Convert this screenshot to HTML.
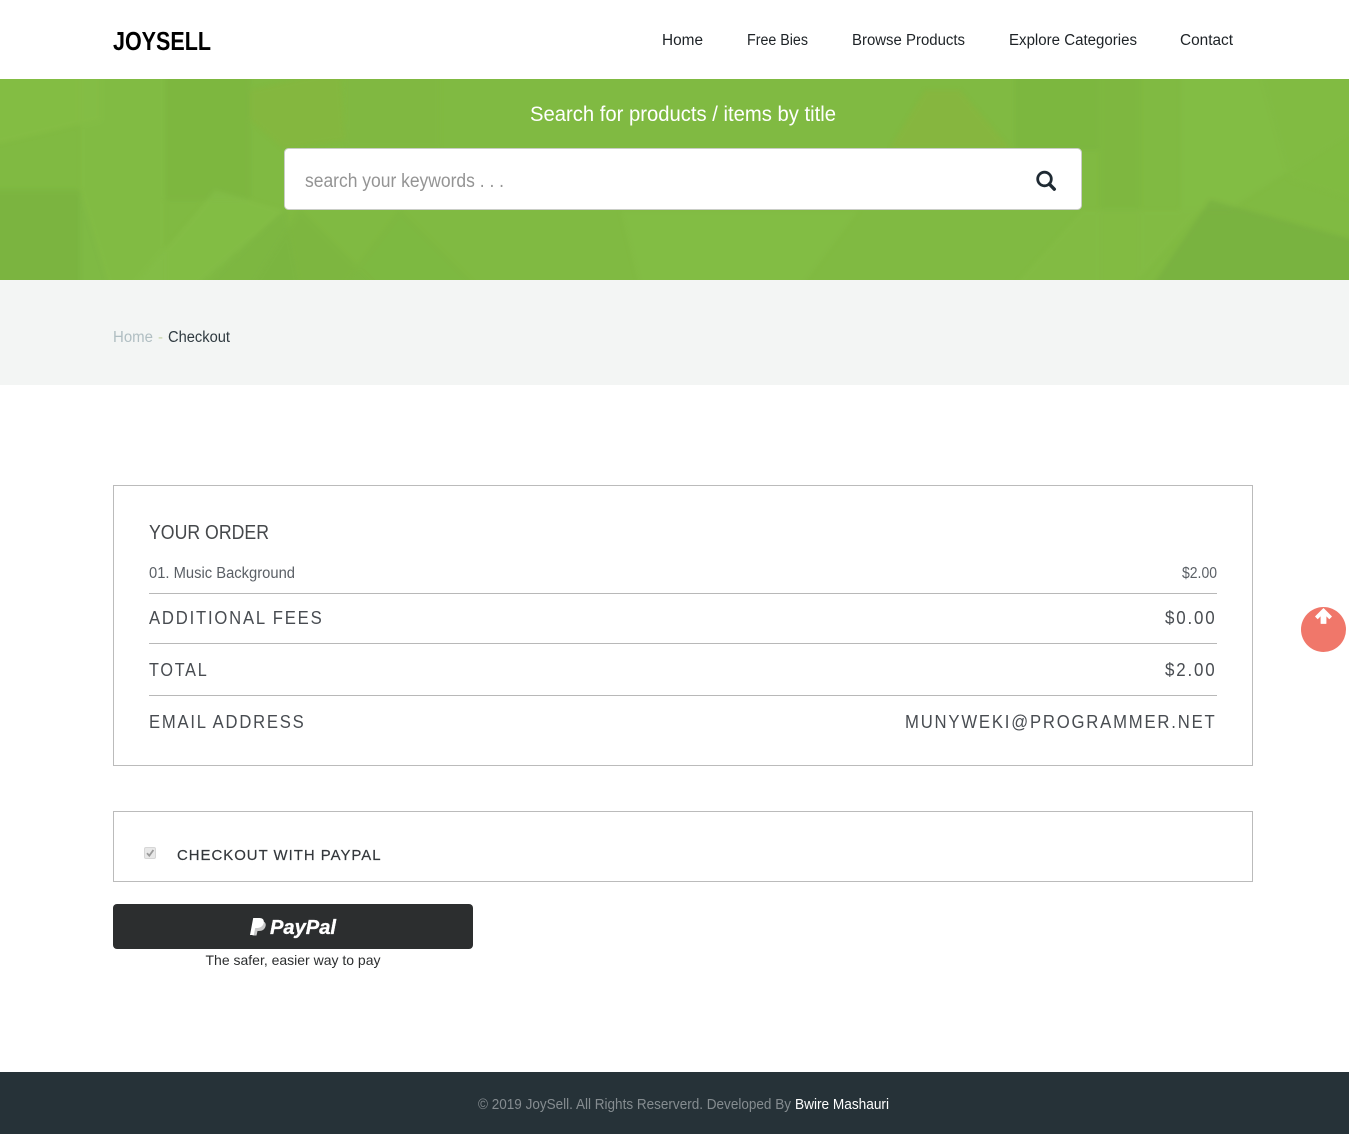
<!DOCTYPE html>
<html lang="en">
<head>
<meta charset="utf-8">
<title>JoySell Checkout</title>
<style>
html,body{margin:0;padding:0;background:#fff;}
body{width:1349px;height:1134px;overflow:hidden;position:relative;}
svg{position:absolute;left:0;top:0;display:block;}
text{font-family:"Liberation Sans",Arial,sans-serif;white-space:pre;}
</style>
</head>
<body>
<svg width="1349" height="1134" viewBox="0 0 1349 1134" xmlns="http://www.w3.org/2000/svg">
  <defs>
    <filter id="soft" x="-5%" y="-5%" width="110%" height="110%"><feGaussianBlur stdDeviation="2.2"/></filter>
    <clipPath id="heroclip"><rect x="0" y="79" width="1349" height="201"/></clipPath>
  </defs>
  <rect width="1349" height="1134" fill="#fff"/>

  <!-- hero -->
  <rect x="0" y="79" width="1349" height="201" fill="#80ba42"/>
  <g clip-path="url(#heroclip)">
    <g filter="url(#soft)" opacity=".68">
      <polygon points="-5,70 100,70 100,120 -5,145" fill="#87c047" opacity=".7"/>
      <polygon points="-5,190 80,190 110,290 -5,290" fill="#78b140" opacity=".9"/>
      <polygon points="80,70 165,70 165,290 80,290" fill="#85bf48" opacity=".55"/>
      <polygon points="165,70 250,70 250,200 165,200" fill="#7ab43f" opacity=".7"/>
      <polygon points="250,90 340,70 345,140 284,149 250,120" fill="#86b63d" opacity=".9"/>
      <polygon points="215,190 284,210 200,290 130,290" fill="#86c04a" opacity=".7"/>
      <polygon points="345,70 440,70 440,148 345,148" fill="#83b83f" opacity=".5"/>
      <polygon points="285,210 300,290 190,290" fill="#76ae42" opacity=".35"/>
      <polygon points="300,210 380,290 250,290" fill="#77b041" opacity=".4"/>
      <polygon points="400,210 480,290 340,290" fill="#7bb540" opacity=".6"/>
      <polygon points="620,210 860,210 800,290 640,290" fill="#85bf47" opacity=".6"/>
      <polygon points="925,90 960,90 1010,148 890,148" fill="#8ab53e" opacity=".9"/>
      <polygon points="1015,70 1100,70 1100,150 1015,150" fill="#79b33f" opacity=".7"/>
      <polygon points="1100,70 1140,70 1140,290 1100,290" fill="#7ab440" opacity=".4"/>
      <polygon points="1180,70 1354,70 1354,130 1230,210 1180,210" fill="#85bf47" opacity=".6"/>
      <polygon points="1082,210 1200,210 1130,290 1010,290" fill="#86c049" opacity=".55"/>
      <polygon points="1210,200 1354,240 1354,290 1150,290" fill="#74ab42" opacity=".75"/>
      <polygon points="1260,70 1354,70 1354,200 1290,180" fill="#82bc44" opacity=".7"/>
    </g>
  </g>

  <!-- breadcrumb band -->
  <rect x="0" y="280" width="1349" height="105" fill="#f3f5f4"/>

  <!-- header -->
  <text x="113" y="50" font-size="26" font-weight="700" fill="#000" textLength="98" lengthAdjust="spacingAndGlyphs">JOYSELL</text>
  <g font-size="15.5" fill="#1d2226">
    <text x="662" y="45" textLength="41" lengthAdjust="spacingAndGlyphs">Home</text>
    <text x="747" y="45" textLength="61" lengthAdjust="spacingAndGlyphs">Free Bies</text>
    <text x="852" y="45" textLength="113" lengthAdjust="spacingAndGlyphs">Browse Products</text>
    <text x="1009" y="45" textLength="128" lengthAdjust="spacingAndGlyphs">Explore Categories</text>
    <text x="1180" y="45" textLength="53" lengthAdjust="spacingAndGlyphs">Contact</text>
  </g>

  <!-- search -->
  <text x="530" y="121" font-size="21" fill="#fff" textLength="306" lengthAdjust="spacingAndGlyphs">Search for products / items by title</text>
  <rect x="284.5" y="148.5" width="797" height="61" rx="4" fill="#fff" stroke="#c9cdc6"/>
  <text x="305" y="187" font-size="19" fill="#949494" textLength="199" lengthAdjust="spacingAndGlyphs">search your keywords . . .</text>
  <circle cx="1044.5" cy="179" r="6.8" fill="none" stroke="#1f2a33" stroke-width="2.8"/>
  <path d="M1049.3 184 L1054.3 189.2" fill="none" stroke="#1f2a33" stroke-width="3.4" stroke-linecap="round"/>

  <!-- breadcrumb -->
  <text x="113" y="342" font-size="15.5" fill="#b0bec2" textLength="40" lengthAdjust="spacingAndGlyphs">Home</text>
  <text x="158" y="342" font-size="15" fill="#c3d3a3">-</text>
  <text x="168" y="342" font-size="15.5" fill="#2f3a40" textLength="62" lengthAdjust="spacingAndGlyphs">Checkout</text>

  <!-- order box -->
  <rect x="113.5" y="485.5" width="1139" height="280" fill="#fff" stroke="#bbb"/>
  <text x="149" y="539" font-size="20.5" fill="#45484b" textLength="120" lengthAdjust="spacingAndGlyphs">YOUR ORDER</text>
  <text x="149" y="578" font-size="15.5" fill="#5a5f65" textLength="146" lengthAdjust="spacingAndGlyphs">01. Music Background</text>
  <text x="1182" y="578" font-size="15.5" fill="#5a5f65" textLength="35" lengthAdjust="spacingAndGlyphs">$2.00</text>
  <path d="M149 593.5H1217M149 643.5H1217M149 695.5H1217" stroke="#b8b8b8" fill="none"/>
  <g font-size="18.5" fill="#484c51" letter-spacing="2">
    <text x="149" y="624" textLength="174.5" lengthAdjust="spacingAndGlyphs">ADDITIONAL FEES</text>
    <text x="1165" y="624" textLength="51.5" lengthAdjust="spacingAndGlyphs">$0.00</text>
    <text x="149" y="676" textLength="59.5" lengthAdjust="spacingAndGlyphs">TOTAL</text>
    <text x="1165" y="676" textLength="51.5" lengthAdjust="spacingAndGlyphs">$2.00</text>
    <text x="149" y="728" textLength="156.5" lengthAdjust="spacingAndGlyphs">EMAIL ADDRESS</text>
    <text x="905" y="728" textLength="311.5" lengthAdjust="spacingAndGlyphs">MUNYWEKI@PROGRAMMER.NET</text>
  </g>

  <!-- paypal box -->
  <rect x="113.5" y="811.5" width="1139" height="70" fill="#fff" stroke="#bbb"/>
  <rect x="144.5" y="847.5" width="11" height="11" rx="1.5" fill="#e8e8e8" stroke="#d6d6d6"/>
  <path d="M147 853.2 L149.3 855.7 L153.4 850" fill="none" stroke="#9a9a9a" stroke-width="1.8"/>
  <text x="177" y="860" font-size="15" letter-spacing="1" fill="#33373b" stroke="#33373b" stroke-width=".2" textLength="204.5" lengthAdjust="spacingAndGlyphs">CHECKOUT WITH PAYPAL</text>

  <!-- paypal button -->
  <rect x="113" y="904" width="360" height="45" rx="4" fill="#2c2e2f"/>
  <path d="M255 921H261C264.5 921 266.3 923 265.6 926C264.8 929.5 262 931 259 931H257.5L256.5 935.5H252.5Z" fill="#c9c9c9"/>
  <path d="M253.2 918H259.5C262.8 918 264.3 920 263.7 923C263 926.3 260.2 928 257.2 928H255.2L253.8 935H250Z" fill="#fff"/>
  <text x="270" y="934" font-size="20" font-weight="700" font-style="italic" fill="#fff" stroke="#fff" stroke-width=".35" textLength="66" lengthAdjust="spacingAndGlyphs">PayPal</text>
  <text x="293" y="965" font-size="14" fill="#2c2e2f" text-anchor="middle" textLength="175" lengthAdjust="spacingAndGlyphs">The safer, easier way to pay</text>

  <!-- scroll to top -->
  <circle cx="1323.5" cy="629.5" r="22.5" fill="#f0776a"/>
  <path d="M1323.5 608.5 L1331.5 616.5 L1329.3 618.7 L1326 615.4 L1326 623.5 L1321 623.5 L1321 615.4 L1317.7 618.7 L1315.5 616.5 Z" fill="#fff" stroke="#fff" stroke-width=".8" stroke-linejoin="round"/>

  <!-- footer -->
  <rect x="0" y="1072" width="1349" height="62" fill="#263238"/>
  <text x="478" y="1109" font-size="14.5" fill="#858c90" textLength="313" lengthAdjust="spacingAndGlyphs">© 2019 JoySell. All Rights Reserverd. Developed By</text>
  <text x="795" y="1109" font-size="14.5" fill="#fff" textLength="94" lengthAdjust="spacingAndGlyphs">Bwire Mashauri</text>
</svg>
</body>
</html>
